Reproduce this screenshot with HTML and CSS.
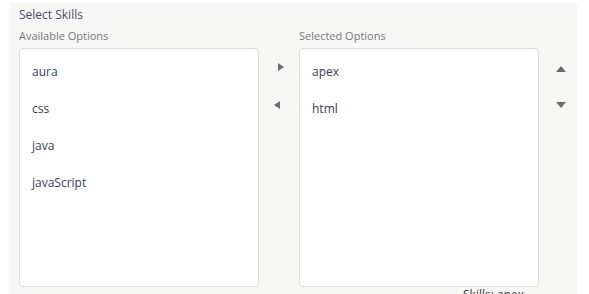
FILE: index.html
```html
<!doctype html>
<html>
<head>
<meta charset="UTF-8">
<title>Select Skills</title>
<link rel="stylesheet" href="styles.css">
</head>
<body>
<div class="panel">
    <div class="legend">Select Skills</div>
    <div class="dueling">
        <div class="col">
            <div class="label">Available Options</div>
            <ul class="listbox">
                <li>aura</li>
                <li>css</li>
                <li>java</li>
                <li>javaScript</li>
            </ul>
        </div>
        <div class="moves">
            <span class="arrow right"></span>
            <span class="arrow left"></span>
        </div>
        <div class="col">
            <div class="label">Selected Options</div>
            <ul class="listbox">
                <li>apex</li>
                <li>html</li>
            </ul>
        </div>
        <div class="moves order">
            <span class="arrow up"></span>
            <span class="arrow down"></span>
        </div>
    </div>
    <div class="footer">Skills: apex</div>
</div>
</body>
</html>
```

FILE: styles.css
```css
body,div,ul,li{margin:0;padding:0;}
ul{list-style-type:none;}
body{background:#fff;font:12px/16px "Open Sans",Arial,sans-serif;color:#3e3e3c;overflow:hidden;}
.panel{margin:3px 12px 0 10px;background:#f7f7f6;padding:4px 0 0 9px;height:300px;}
.legend{color:#44506a;font-size:12px;line-height:16px;height:16px;margin-bottom:5px;}
.dueling{display:flex;align-items:flex-start;}
.col{width:240px;flex-shrink:0;}
.label{color:#76787b;font-size:11px;line-height:16px;height:16px;margin-bottom:4px;}
.listbox{background:#fff;border:1px solid #dddbda;border-radius:4px;height:239px;padding:9px 0 0 12px;box-sizing:border-box;}
.listbox li{font-size:12px;line-height:16px;color:#34405a;padding:6px 0;margin-bottom:9px;height:16px;}
.moves{width:40px;flex-shrink:0;display:flex;flex-direction:column;align-items:center;padding-top:35px;gap:30px;}
.moves.order{width:31px;padding:38px 0 0 6px;}
.arrow{display:block;width:0;height:0;border:4px solid transparent;}
.arrow.right{border-left:6px solid #6b6d70;border-right:0;margin-left:4px;}
.arrow.left{border-right:6px solid #6b6d70;border-left:0;margin-left:-4px;}
.arrow.up{border-bottom:6px solid #6b6d70;border-top:0;border-left-width:5px;border-right-width:5px;}
.arrow.down{border-top:6px solid #6b6d70;border-bottom:0;border-left-width:5px;border-right-width:5px;}
.footer{margin:0 0 0 444px;color:#3e3e3c;font-size:12px;}
```
